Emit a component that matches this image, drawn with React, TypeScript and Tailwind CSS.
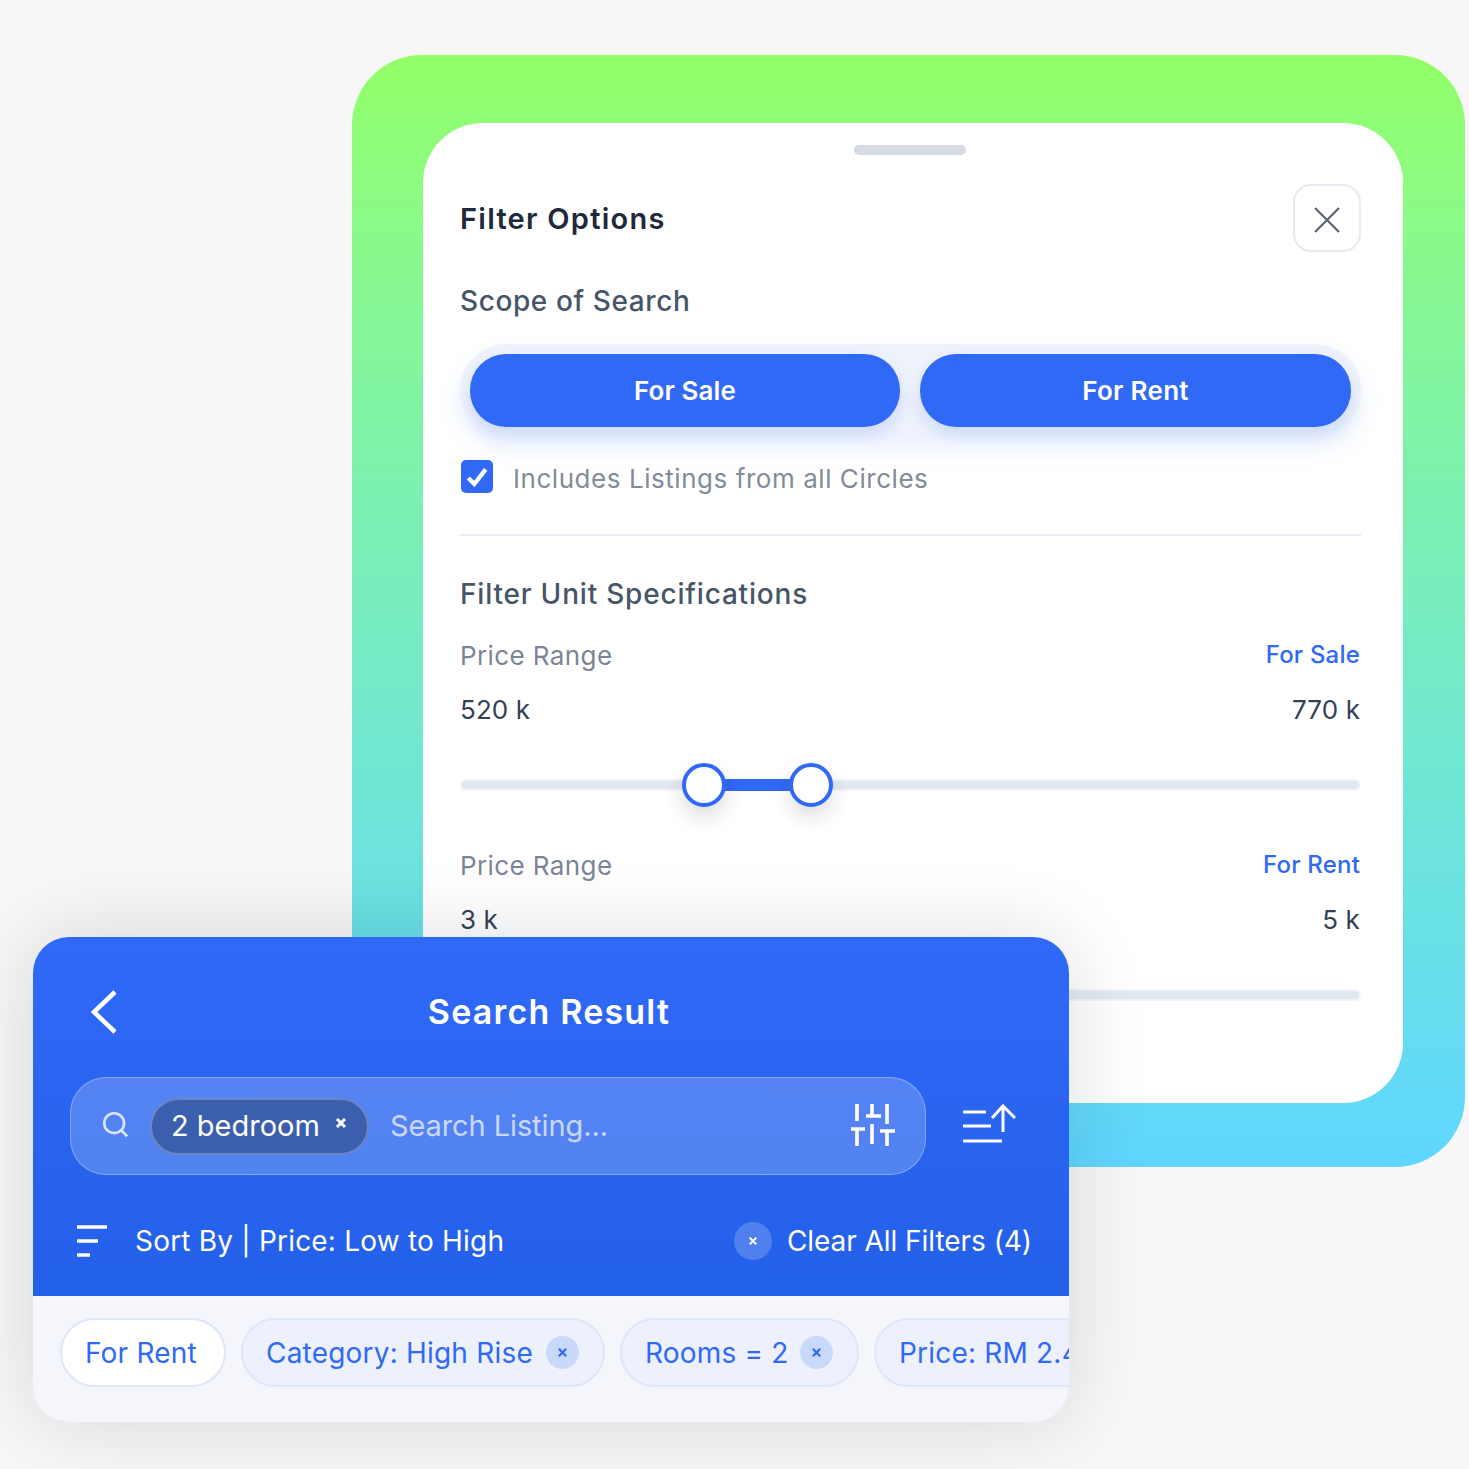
import React from 'react'

const font = { fontFamily: '"Inter", "Noto Sans", sans-serif' }

const SmallX = ({ size = 12, width = 2.4 }: { size?: number; width?: number }) => (
  <svg width={size} height={size} viewBox="0 0 12 12" fill="none" stroke="currentColor" strokeWidth={width}>
    <path d="M2 2l8 8M10 2l-8 8" />
  </svg>
)

const PriceBlock = ({ tag, low, high }: { tag: string; low: string; high: string }) => (
  <div className="pr-[1px]">
    <div className="flex items-center justify-between h-[34px]">
      <span className="text-[26px] tracking-[0.4px] text-[#7c8596]">Price Range</span>
      <span className="text-[24px] font-medium tracking-[0.2px] text-[#3069f6]">{tag}</span>
    </div>
    <div className="flex items-center justify-between h-[34px] mt-[20px] text-[26px] tracking-[0.1px] text-[#334155]">
      <span>{low}</span>
      <span>{high}</span>
    </div>
  </div>
)

const Slider = ({ thumbs }: { thumbs: boolean }) => (
  <div className="relative h-[12px] mt-[53px] rounded-full bg-[#e2e8f0] border-2 border-[#f1f4f8]">
    {thumbs && (
      <div className="absolute left-[220px] top-1/2 -translate-y-1/2 flex items-center w-[151px]">
        <div className="w-[44px] h-[44px] shrink-0 rounded-full bg-white border-[4px] border-[#3069f6] shadow-[0_10px_20px_rgba(15,23,42,0.14)] z-10" />
        <div className="flex-1 h-[12px] -mx-[1px] bg-[#3069f6]" />
        <div className="w-[44px] h-[44px] shrink-0 rounded-full bg-white border-[4px] border-[#3069f6] shadow-[0_10px_20px_rgba(15,23,42,0.14)] z-10" />
      </div>
    )}
  </div>
)

const Chip = ({ label, white, close, w }: { label: string; white?: boolean; close?: boolean; w: string }) => (
  <div
    className={`flex items-center shrink-0 h-[69px] pl-[23px] rounded-full border-2 border-[#dfe6fa] text-[28px] tracking-[0.2px] text-[#3069f6] whitespace-nowrap ${w} ${white ? 'bg-white' : 'bg-[#edf1fd]'}`}
  >
    <span>{label}</span>
    {close && (
      <span className="ml-auto mr-[24px] flex items-center justify-center w-[33px] h-[33px] rounded-full bg-[#c9d9fa]">
        <SmallX size={11} />
      </span>
    )}
  </div>
)

const App = () => {
  return (
    <div className="relative w-[1469px] h-[1469px] overflow-hidden bg-[#f7f7f7] pt-[55px] pl-[352px]" style={font}>
      {/* green backdrop + filter sheet */}
      <div className="w-[1113px] h-[1112px] pt-[68px] pl-[71px] rounded-[70px] bg-gradient-to-b from-[#93ff67] to-[#60d6ff]">
        <div className="w-[980px] h-[980px] rounded-[60px] bg-white pt-[22px] pl-[37px] pr-[42px]">
          <div className="w-[112px] h-[10px] ml-[394px] rounded-full bg-[#d5dae5]" />
          <div className="flex items-center justify-between mt-[29px] h-[68px]">
            <h2 className="mt-[2px] text-[29px] font-semibold tracking-[1.25px] text-[#1e293b]">Filter Options</h2>
            <button className="flex items-center justify-center w-[68px] h-[68px] pt-[3px] rounded-[18px] border-2 border-[#e6eaf1] text-[#5b6472]">
              <svg width="30" height="30" viewBox="0 0 30 30" fill="none" stroke="currentColor" strokeWidth="2.2">
                <path d="M3 3l24 24M27 3L3 27" />
              </svg>
            </button>
          </div>
          <h3 className="mt-[32px] h-[34px] leading-[34px] text-[28px] font-medium tracking-[0.6px] text-[#475569]">Scope of Search</h3>
          <div className="flex gap-[20px] mt-[26px] p-[10px] pb-[9px] rounded-full bg-[#eef2fb] shadow-[0_12px_24px_rgba(48,105,246,0.10)]">
            <button className="w-[430px] h-[73px] rounded-[36px] bg-[#3069f6] text-white text-[26px] font-semibold tracking-[0.1px] shadow-[0_8px_16px_rgba(48,105,246,0.18)]">For Sale</button>
            <button className="flex-1 h-[73px] rounded-[36px] bg-[#3069f6] text-white text-[26px] font-semibold tracking-[0.3px] shadow-[0_8px_16px_rgba(48,105,246,0.18)]">For Rent</button>
          </div>
          <div className="flex items-center mt-[24px] h-[33px] pl-[1px]">
            <span className="flex items-center justify-center w-[32px] h-[33px] rounded-[5px] bg-[#3069f6] text-white">
              <svg width="26" height="26" viewBox="0 0 24 24" fill="none" stroke="currentColor" strokeWidth="4">
                <path d="M4 13l5.5 5.5L20 5" />
              </svg>
            </span>
            <span className="ml-[20px] mt-[3px] text-[26px] tracking-[0.55px] text-[#838b99]">Includes Listings from all Circles</span>
          </div>
          <div className="mt-[41px] h-[2px] bg-[#e8ecf3]" />
          <h3 className="mt-[41px] h-[34px] leading-[34px] text-[28px] font-medium tracking-[0.8px] text-[#475569]">Filter Unit Specifications</h3>
          <div className="mt-[27px]">
            <PriceBlock tag="For Sale" low="520 k" high="770 k" />
            <Slider thumbs />
          </div>
          <div className="mt-[57px]">
            <PriceBlock tag="For Rent" low="3 k" high="5 k" />
            <Slider thumbs={false} />
          </div>
        </div>
      </div>

      {/* search result card lies over the sheet */}
      <div className="absolute left-[33px] top-[937px] w-[1036px] h-[485px] rounded-[36px] overflow-hidden bg-[#f4f6fc] shadow-[0_0_80px_rgba(15,23,42,0.14)]">
        <div className="h-[359px] bg-gradient-to-b from-[#3069f8] to-[#2360e8] text-white pt-[40px] pl-[37px] pr-[37px]">
          <div className="relative flex items-center justify-center h-[70px]">
            <svg className="absolute left-[20px] top-[12px]" width="28" height="46" viewBox="0 0 28 46" fill="none" stroke="currentColor" strokeWidth="4.5">
              <path d="M25 3L4 23l21 20" />
            </svg>
            <h1 className="-mt-[2px] pr-[4px] text-[34px] font-semibold tracking-[1.2px]">Search Result</h1>
          </div>
          <div className="flex items-center mt-[30px]">
            <div className="flex items-center w-[856px] h-[98px] pl-[31px] pr-[29px] rounded-[36px] bg-white/20 border border-white/30">
              <svg className="shrink-0 -mt-[4px]" width="27" height="27" viewBox="0 0 30 30" fill="none" stroke="#dbe5fd" strokeWidth="3">
                <circle cx="13.5" cy="13.5" r="11" />
                <path d="M21 21l7 7" />
              </svg>
              <div className="flex items-center shrink-0 ml-[21px] w-[219px] h-[57px] pl-[19px] rounded-full bg-[#3b5eae] border-2 border-white/25">
                <span className="text-[29px] tracking-[0px]">2 bedroom</span>
                <span className="ml-[15px] -mt-[6px]"><SmallX size={12} width={3} /></span>
              </div>
              <span className="ml-[21px] text-[29px] tracking-[-0.1px] text-white/70">Search Listing...</span>
              <svg className="ml-auto -mt-[3px]" width="46" height="42" viewBox="0 0 46 42" fill="none" stroke="currentColor" strokeWidth="3.6">
                <path d="M7 0v17M7 25v17M1 25h14M22 0v12M22 20v20M16 12h15M37 0v20M37 27v15M30 27h15" />
              </svg>
            </div>
            <svg className="ml-[36px] -mt-[4px]" width="54" height="40" viewBox="0 0 54 40" fill="none" stroke="currentColor" strokeWidth="3">
              <path d="M1 8h23M1 22h28M1 37h39M41 28V3M30 14L41 2l12 12" />
            </svg>
          </div>
          <div className="flex items-center justify-between mt-[45px]">
            <div className="flex items-center">
              <svg className="ml-[6px]" width="31" height="32" viewBox="0 0 31 32" fill="none" stroke="currentColor" strokeWidth="3.6">
                <path d="M1 2h30M1 16h21M1 30h13" />
              </svg>
              <span className="ml-[28px] text-[28px] tracking-[0.2px]">Sort By | Price: Low to High</span>
            </div>
            <div className="flex items-center">
              <span className="flex items-center justify-center w-[38px] h-[38px] rounded-full bg-white/20">
                <SmallX size={10} />
              </span>
              <span className="ml-[15px] text-[28px] tracking-[-0.05px]">Clear All Filters (4)</span>
            </div>
          </div>
        </div>
        <div className="flex gap-[15px] pt-[22px] pl-[27px]">
          <Chip label="For Rent" white w="w-[166px]" />
          <Chip label="Category: High Rise" close w="w-[364px]" />
          <Chip label="Rooms = 2" close w="w-[239px]" />
          <Chip label="Price: RM 2.4k - RM 3k" w="w-[364px]" />
        </div>
      </div>
    </div>
  )
}

export default App
